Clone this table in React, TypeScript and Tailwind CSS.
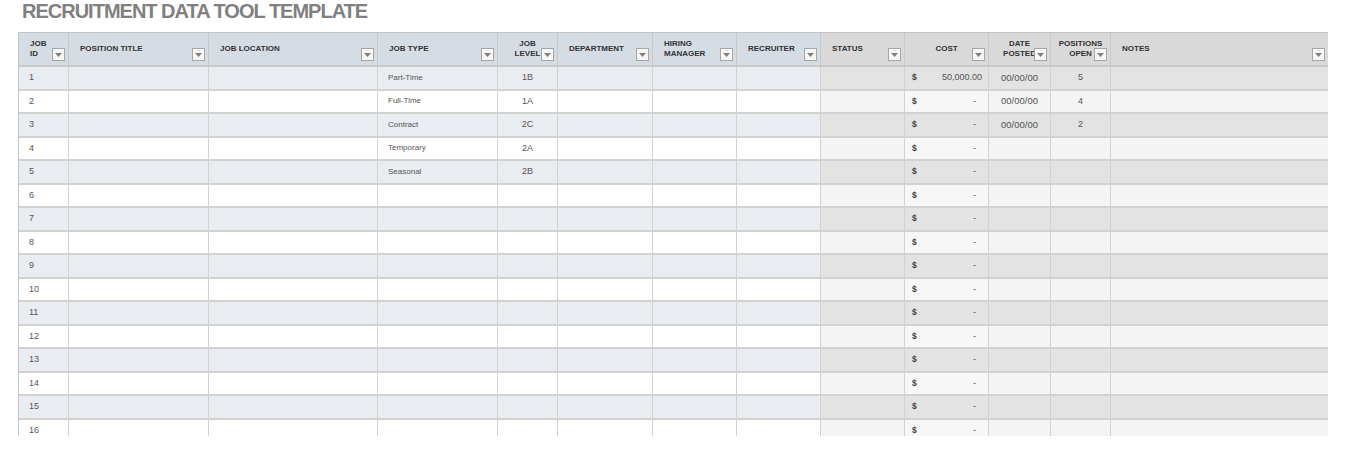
import React from "react";

// Columnas de la tabla (alineacion y grupo de color)
interface Column {
  label: string[];
  align: "left" | "center";
  gray: boolean;
}

const columns: Column[] = [
  { label: ["JOB", "ID"], align: "left", gray: false },
  { label: ["POSITION TITLE"], align: "left", gray: false },
  { label: ["JOB LOCATION"], align: "left", gray: false },
  { label: ["JOB TYPE"], align: "left", gray: false },
  { label: ["JOB", "LEVEL"], align: "center", gray: false },
  { label: ["DEPARTMENT"], align: "left", gray: false },
  { label: ["HIRING", "MANAGER"], align: "left", gray: false },
  { label: ["RECRUITER"], align: "left", gray: false },
  { label: ["STATUS"], align: "left", gray: true },
  { label: ["COST"], align: "center", gray: true },
  { label: ["DATE", "POSTED"], align: "center", gray: true },
  { label: ["POSITIONS", "OPEN"], align: "center", gray: true },
  { label: ["NOTES"], align: "left", gray: true },
];

interface Row {
  type?: string;
  level?: string;
  cost?: string;
  date?: string;
  open?: string;
}

const data: Row[] = [
  { type: "Part-Time", level: "1B", cost: "50,000.00", date: "00/00/00", open: "5" },
  { type: "Full-Time", level: "1A", date: "00/00/00", open: "4" },
  { type: "Contract", level: "2C", date: "00/00/00", open: "2" },
  { type: "Temporary", level: "2A" },
  { type: "Seasonal", level: "2B" },
  ...Array.from({ length: 11 }, () => ({})),
];

const FilterButton = () => (
  <div className="absolute right-[3px] bottom-[4px] w-[13px] h-[13px] border border-[#a6a6a6] bg-[#f7f7f7] flex items-center justify-center">
    <svg width="7" height="4" viewBox="0 0 7 4">
      <path d="M0 0 L7 0 L3.5 4 Z" fill="#7f7f7f" />
    </svg>
  </div>
);

const App: React.FC = () => {
  return (
    <div className="w-[1348px] h-[454px] bg-white overflow-hidden" style={{ fontFamily: '"Liberation Sans", Arial, sans-serif' }}>
      {/* Titulo */}
      <div className="h-[32px] pl-[22px] pt-[1px]">
        <h1 className="text-[20px] leading-[20px] font-bold text-[#808080] tracking-[-1px]">RECRUITMENT DATA TOOL TEMPLATE</h1>
      </div>

      {/* Tabla */}
      <div className="ml-[18px] w-[1310px] h-[404px] overflow-hidden border-l border-t border-[#c4c4c4]">
        <div className="grid grid-cols-[50px_140px_169px_120px_60px_95px_84px_84px_84px_84px_62px_60px_218px]">
          {columns.map((col, i) => (
            <div
              key={i}
              className={`relative h-[34px] border-r border-b-2 border-[#c9c9c9] flex flex-col justify-center text-[8px] leading-[10px] font-bold text-[#333333] ${col.gray ? "bg-[#d9d9d9]" : "bg-[#d6dce4]"} ${col.align === "center" ? "items-center" : "items-start pl-[11px]"}`}
            >
              {col.label.map((l, j) => (
                <span key={j}>{l}</span>
              ))}
              <FilterButton />
            </div>
          ))}

          {data.map((row, r) => {
            const odd = r % 2 === 0;
            const blue = odd ? "bg-[#e9ecf1]" : "bg-white";
            const gray = odd ? "bg-[#e3e3e3]" : "bg-[#f4f4f4]";
            const cell = "h-[23.5px] border-r border-b-2 border-[#d2d2d2] flex items-center text-[#555555]";
            return (
              <React.Fragment key={r}>
                <div className={`${cell} ${blue} pl-[10px] text-[9px]`}>{r + 1}</div>
                <div className={`${cell} ${blue}`}></div>
                <div className={`${cell} ${blue}`}></div>
                <div className={`${cell} ${blue} pl-[10px] text-[8px]`}>{row.type}</div>
                <div className={`${cell} ${blue} justify-center text-[9px]`}>{row.level}</div>
                <div className={`${cell} ${blue}`}></div>
                <div className={`${cell} ${blue}`}></div>
                <div className={`${cell} ${blue}`}></div>
                <div className={`${cell} ${gray}`}></div>
                <div className={`${cell} ${odd ? "bg-[#e3e3e3]" : "bg-[#f7f7f7]"} justify-between pl-[7px] pr-[6px] text-[9px]`}>
                  <span className="font-bold text-[#404040] text-[8.5px]">$</span>
                  <span className={row.cost ? "" : "pr-[6px]"}>{row.cost ?? "-"}</span>
                </div>
                <div className={`${cell} ${gray} justify-center text-[9.5px]`}>{row.date}</div>
                <div className={`${cell} ${gray} justify-center text-[9px]`}>{row.open}</div>
                <div className={`${cell} ${gray}`}></div>
              </React.Fragment>
            );
          })}
        </div>
      </div>
    </div>
  );
};

export default App;
